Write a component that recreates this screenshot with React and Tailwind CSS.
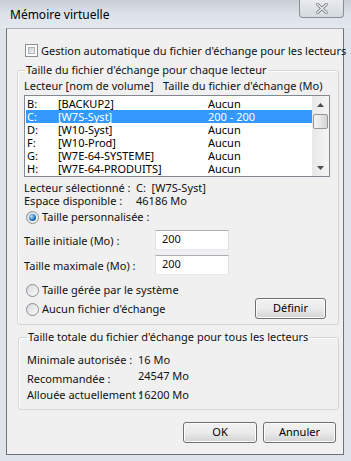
import React from "react";

const F = "font-['Noto_Sans',sans-serif]";

function Checkbox() {
  return (
    <div className="w-[13px] h-[13px] border border-[#8e8f8f] bg-white p-[2px] shrink-0">
      <div className="w-full h-full bg-gradient-to-br from-[#cbcfd5] to-[#f6f6f6] border border-[#aeb3b9]" />
    </div>
  );
}

function Radio({ checked }) {
  return (
    <div className="w-[13px] h-[13px] shrink-0 rounded-full border border-[#8e8f8f] bg-gradient-to-br from-[#d6d9dd] to-[#fbfbfb] flex items-center justify-center">
      {checked && (
        <div className="w-[7px] h-[7px] rounded-full bg-[radial-gradient(circle_at_35%_35%,#bfe4ff,#1a6fb8_60%,#0d3f70)]" />
      )}
    </div>
  );
}

function Button({ children, w = "w-[74px]" }) {
  return (
    <div
      className={`${w} h-[21px] rounded-[3px] border border-[#707070] bg-gradient-to-b from-[#f2f2f2] via-[#ebebeb] to-[#d3d3d3] flex items-center justify-center text-black shadow-[inset_0_0_0_1px_#fcfcfc]`}
    >
      {children}
    </div>
  );
}

function TextBox({ value }) {
  return (
    <div className="w-[74px] h-[20px] bg-white border border-[#abadb3] border-b-[#e3e9ef] border-l-[#e2e3ea] border-r-[#dbdfe6] pl-[6px] leading-[15px]">
      {value}
    </div>
  );
}

const rows = [
  ["B:", "[BACKUP2]", "Aucun"],
  ["C:", "[W7S-Syst]", "200 - 200"],
  ["D:", "[W10-Syst]", "Aucun"],
  ["F:", "[W10-Prod]", "Aucun"],
  ["G:", "[W7E-64-SYSTEME]", "Aucun"],
  ["H:", "[W7E-64-PRODUITS]", "Aucun"],
];

export default function App() {
  return (
    <div className={`${F} w-[351px] h-[461px] overflow-hidden bg-[#dfe4ea] text-[11px] text-[#111] whitespace-nowrap flex flex-col`}>
      {/* title bar */}
      <div className="h-[28px] flex items-start bg-gradient-to-b from-[#c9ced4] via-[#dde2e8] to-[#e3e8ee]">
        <div className="pl-[10px] pt-[6px] text-[12px] text-black leading-[18px]">Mémoire virtuelle</div>
        <div className="flex-1" />
        <div className="mr-[7px] w-[45px] h-[18px] rounded-b-[4px] border border-t-0 border-[#8a8f96] bg-gradient-to-b from-[#e8ebef] to-[#d5dae0] flex items-center justify-center">
          <svg width="12" height="11" viewBox="0 0 12 11">
            <path d="M1 1 L11 10 M11 1 L1 10" stroke="#6b7076" strokeWidth="3" strokeLinecap="round" />
            <path d="M1 1 L11 10 M11 1 L1 10" stroke="#f4f6f8" strokeWidth="1.4" strokeLinecap="round" />
          </svg>
        </div>
      </div>
      {/* panel */}
      <div className="ml-[6px] w-[338px] h-[427px] border border-[#6f7377] border-t-[#a8acb0] bg-[#f0f0f0] flex flex-col">
        <div className="h-[41px] pt-[15px] pl-[18px] flex items-start gap-[2px]">
          <Checkbox />
          <div className="leading-[13px] ml-[1px]">Gestion automatique du fichier d'échange pour les lecteurs</div>
        </div>
        {/* group 1 */}
        <fieldset className="ml-[10px] w-[322px] h-[262px] -mt-[7px] border border-[#d5d5d5] rounded-[3px] px-[6px] pb-0 pt-0 shadow-[inset_1px_1px_0_#fff]">
          <legend className="px-[1px] ml-[1px] leading-[14px]">Taille du fichier d'échange pour chaque lecteur</legend>
          <div className="flex h-[17px] items-center mt-[1px]">
            <div className="w-[139px]">Lecteur [nom de volume]</div>
            <div>Taille du fichier d'échange (Mo)</div>
          </div>
          <div className="w-[306px] h-[82px] border border-[#828790] bg-white flex">
            <div className="flex-1 pt-[1px] pl-[1px]">
              {rows.map((r, i) => (
                <div
                  key={i}
                  className={`flex h-[13px] items-center leading-[13px] ${i === 1 ? "bg-[#3399ff] text-white" : "text-black"}`}
                >
                  <div className="w-[32px] pl-[1px]">{r[0]}</div>
                  <div className="w-[150px]">{r[1]}</div>
                  <div>{r[2]}</div>
                </div>
              ))}
            </div>
            <div className="w-[17px] bg-gradient-to-r from-[#e8e8e8] to-[#f5f5f5] flex flex-col items-center">
              <div className="h-[17px] flex items-center justify-center">
                <svg width="7" height="4" viewBox="0 0 7 4"><path d="M0 4 L3.5 0 L7 4Z" fill="#4d4d4d" /></svg>
              </div>
              <div className="w-[15px] h-[15px] mt-[1px] rounded-[2px] border border-[#979797] bg-gradient-to-r from-[#f4f4f4] via-[#e6e6e6] to-[#d4d4d4]" />
              <div className="flex-1" />
              <div className="h-[17px] flex items-center justify-center">
                <svg width="7" height="4" viewBox="0 0 7 4"><path d="M0 0 L7 0 L3.5 4Z" fill="#4d4d4d" /></svg>
              </div>
            </div>
          </div>
          <div className="flex h-[13px] items-center mt-[4px] leading-[13px]">
            <div className="w-[112px]">Lecteur sélectionné :</div>
            <div>C:&nbsp; [W7S-Syst]</div>
          </div>
          <div className="flex h-[13px] items-center leading-[13px]">
            <div className="w-[112px]">Espace disponible :</div>
            <div>46186 Mo</div>
          </div>
          <div className="flex items-center h-[13px] mt-[4px] pl-[2px] gap-[3px]">
            <Radio checked />
            <div>Taille personnalisée :</div>
          </div>
          <div className="flex items-center h-[20px] mt-[6px]">
            <div className="w-[131px] pt-[2px]">Taille initiale (Mo) :</div>
            <TextBox value="200" />
          </div>
          <div className="flex items-center h-[20px] mt-[5px]">
            <div className="w-[131px] pt-[2px]">Taille maximale (Mo) :</div>
            <TextBox value="200" />
          </div>
          <div className="flex items-center h-[13px] mt-[9px] pl-[2px] gap-[3px]">
            <Radio />
            <div>Taille gérée par le système</div>
          </div>
          <div className="flex items-center h-[20px] mt-[2px] pl-[2px] gap-[3px]">
            <Radio />
            <div className="flex-1">Aucun fichier d'échange</div>
            <div className="mr-[6px] mt-[-1px]">
              <Button w="w-[71px]">Définir</Button>
            </div>
          </div>
        </fieldset>
        {/* group 2 */}
        <fieldset className="ml-[11px] w-[321px] h-[80px] mt-[5px] border border-[#d5d5d5] rounded-[3px] px-[8px] pb-0 pt-0 shadow-[inset_1px_1px_0_#fff]">
          <legend className="px-[1px] leading-[14px]">Taille totale du fichier d'échange pour tous les lecteurs</legend>
          <div className="flex h-[14px] items-center mt-[9px]">
            <div className="w-[111px]">Minimale autorisée :</div>
            <div>16 Mo</div>
          </div>
          <div className="flex h-[14px] items-center mt-[5px]">
            <div className="w-[111px]">Recommandée :</div>
            <div className="-mt-[5px]">24547 Mo</div>
          </div>
          <div className="flex h-[14px] items-center mt-[2px]">
            <div className="w-[111px]">Allouée actuellement :</div>
            <div>16200 Mo</div>
          </div>
        </fieldset>
        <div className="flex justify-end gap-[6px] pr-[7px] mt-[12px]">
          <Button>OK</Button>
          <Button w="w-[73px]">Annuler</Button>
        </div>
      </div>
    </div>
  );
}
